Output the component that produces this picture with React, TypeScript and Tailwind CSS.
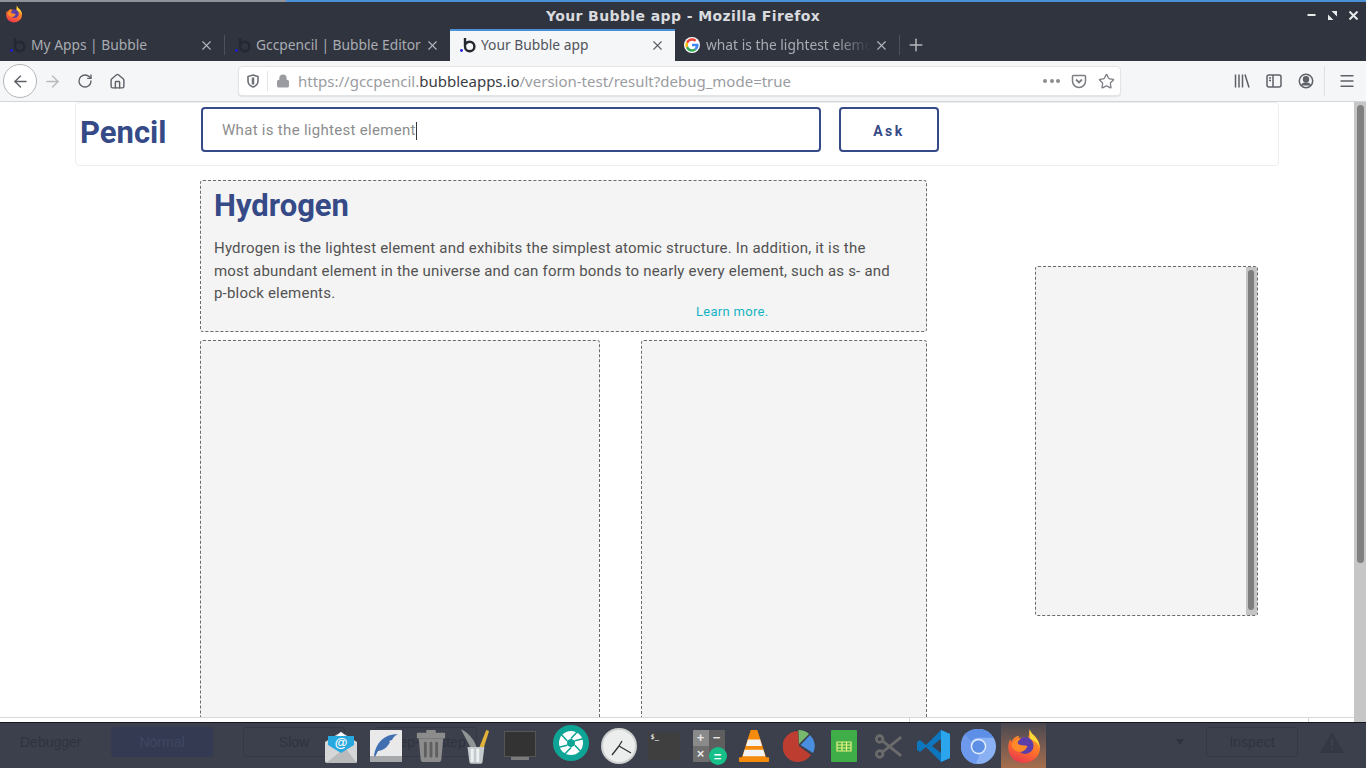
import { Lock, RotateCw, Home, ArrowLeft, ArrowRight, X, Plus, Star, Menu } from "lucide-react"

const uiFont = "font-['Noto_Sans','Open_Sans',sans-serif]"
const pageFont = "font-['Roboto','Inter',sans-serif]"

function BubbleLogo({ dim }: { dim?: boolean }) {
  return (
    <svg width="18" height="18" viewBox="0 0 18 18" className="shrink-0">
      <circle cx="2.5" cy="14.5" r="1.4" fill="#1a1ae0" />
      <path d="M6 2v8.5a4.7 4.7 0 1 0 4.7-4.7A4.7 4.7 0 0 0 6.5 8" fill="none" stroke={dim ? "#232833" : "#22262e"} strokeWidth="2.4" />
    </svg>
  )
}

function GoogleLogo() {
  return (
    <svg width="16" height="16" viewBox="0 0 48 48" className="mr-[2px] shrink-0">
      <circle cx="24" cy="24" r="24" fill="#fff" />
      <path fill="#ea4335" d="M24 11c3.500 0 6.200 1.300 8.200 3.100l5.300-5.200C34.200 5.900 29.500 4 24 4 16.200 4 9.500 8.500 6.200 15l6.200 4.800C13.900 14.700 18.500 11 24 11z" />
      <path fill="#4285f4" d="M43.600 24.500c0-1.500-.1-2.800-.4-4.100H24v7.600h11.100c-.5 2.500-1.900 4.700-4 6.100l6.100 4.700c3.600-3.300 6.400-8.200 6.400-14.300z" />
      <path fill="#fbbc05" d="M12.400 28.300A12 12 0 0 1 11.800 24c0-1.500.2-2.900.6-4.300L6.200 15A20 20 0 0 0 4 24c0 3.200.8 6.300 2.200 9z" />
      <path fill="#34a853" d="M24 44c5.400 0 9.900-1.800 13.200-4.800l-6.100-4.700c-1.800 1.200-4.200 2-7.100 2-5.500 0-10.100-3.700-11.600-8.700L6.200 33C9.500 39.500 16.200 44 24 44z" />
    </svg>
  )
}

function FirefoxLogo({ size, id }: { size: number; id: string }) {
  return (
    <svg width={size} height={size} viewBox="0 0 32 32" className="shrink-0">
      <defs>
        <linearGradient id={id} x1="0.7" y1="0" x2="0.3" y2="1">
          <stop offset="0" stopColor="#ffb02e" />
          <stop offset="0.55" stopColor="#ff6f2b" />
          <stop offset="1" stopColor="#e8384f" />
        </linearGradient>
      </defs>
      <path d="M21 1c1 4 4 5 6 8 3 4 3.500 8 3 11-1 6-7 11-14 11C8 31 2 25 2 17c0-3 1-6 2-7 0 1 .5 2 1 2.500C6 9 9 7 12 7c-1 1-1 2-.5 2 2-1 6-1 8 1 1-3 1-6 1.500-9z" fill={`url(#${id})`} />
      <path d="M21 1c1 4 4 5 6 8 2 3 3 6 3 9-1-4-4-7-9-8 1-3 0-6 0-9z" fill="#ffd93a" />
      <circle cx="17" cy="15.500" r="7.500" fill="#5b3ea8" />
      <path d="M5 15c1-4 5-6 8-5-2 1-3 2-2.500 3.500C12 16 17 15 19 16c-1 4-5 6-8 5-3-.5-5.500-3-6-6z" fill="#ff8a2a" />
    </svg>
  )
}

function Tab({ title, logo, active, fade, width }: { title: string; logo: React.ReactNode; active?: boolean; fade?: boolean; width: string }) {
  return (
    <div className={`relative flex items-center pl-[9px] pr-[10px] text-[13.800px] ${width} ${active ? "h-[32px] border-t-2 border-[#4a90d9] bg-[#f5f6f7] pb-[2px] text-[#50545c]" : "h-[32px] text-[#a9acb2]"}`}>
      {logo}
      <span className={`ml-[4px] flex-1 overflow-hidden whitespace-nowrap ${fade ? "[mask-image:linear-gradient(to_right,#000_80%,transparent)]" : ""}`}>{title}</span>
      <X size={15} strokeWidth={1.8} className={`ml-[4px] shrink-0 ${active ? "text-[#5a5e66]" : "text-[#b4b6bb]"}`} />
    </div>
  )
}

function TitleBar() {
  return (
    <div className="relative flex h-[29px] shrink-0 items-center justify-center border-t-2 border-[#4a90d9] bg-[#30343e] pt-[2px]">
      <div className="absolute left-0 top-[-2px] h-[2px] w-[286px] bg-[#8f9298]" />
      <div className="absolute left-[5px] top-[3px]">
        <FirefoxLogo size={18} id="ffsmall" />
      </div>
      <span className="font-['DejaVu_Sans',sans-serif] text-[14px] font-bold tracking-[0.4px] text-[#d9dbdf]">Your Bubble app - Mozilla Firefox</span>
      <div className="absolute right-[8px] top-[9px] flex items-center gap-[12px] text-[#e8e9eb]">
        <svg width="9" height="9" viewBox="0 0 9 9" fill="currentColor">
          <rect x="0.500" y="3" width="8" height="2" />
        </svg>
        <svg width="9" height="9" viewBox="0 0 9 9" fill="currentColor">
          <path d="M0 3.500V9H5.500zM9 5.500V0H3.500z" />
        </svg>
        <svg width="9" height="9" viewBox="0 0 9 9" fill="none" stroke="currentColor" strokeWidth="2">
          <path d="M.5.500l8 8M8.500.500l-8 8" />
        </svg>
      </div>
    </div>
  )
}

function TabStrip() {
  return (
    <div className={`flex h-[32px] shrink-0 items-center bg-[#30343e] ${uiFont}`}>
      <Tab title="My Apps | Bubble" logo={<BubbleLogo dim />} width="w-[224px]" />
      <div className="h-[20px] w-px bg-[#4c505a]" />
      <Tab title="Gccpencil | Bubble Editor" logo={<BubbleLogo dim />} width="w-[225px]" />
      <Tab title="Your Bubble app" logo={<BubbleLogo />} width="w-[225px]" active />
      <Tab title="what is the lightest element" logo={<GoogleLogo />} width="w-[224px]" fade />
      <div className="h-[20px] w-px bg-[#4c505a]" />
      <Plus size={20} strokeWidth={1.8} className="ml-[6px] text-[#b4b6bb]" />
    </div>
  )
}

function Toolbar() {
  return (
    <div className={`flex h-[41px] shrink-0 items-center border-b border-[#d4d5d8] bg-[#f5f6f7] text-[#5e6168] ${uiFont}`}>
      <div className="ml-[3px] flex h-[34px] w-[34px] items-center justify-center rounded-full border border-[#b5b6b9] bg-white">
        <ArrowLeft size={19} strokeWidth={1.8} />
      </div>
      <ArrowRight size={19} strokeWidth={1.8} className="ml-[6px] text-[#b8babd]" />
      <RotateCw size={16} strokeWidth={2} className="ml-[15px]" />
      <Home size={17} strokeWidth={2} className="ml-[16px]" />
      <div className="ml-[112px] flex h-[30px] w-[883px] items-center rounded-[4px] border border-[#e3e4e6] bg-white text-[15px] shadow-[0_1px_1px_rgba(0,0,0,0.08)]">
        <svg width="16" height="16" viewBox="0 0 16 16" className="ml-[6px] text-[#6d7076]" fill="none" stroke="currentColor" strokeWidth="1.600">
          <path d="M8 2l5 1.500v4.500c0 3-2.200 5-5 6-2.800-1-5-3-5-6V3.500z" />
          <path d="M8 4.500v7" strokeWidth="2.500" />
        </svg>
        <div className="ml-[6px] h-[20px] w-px bg-[#e3e4e6]" />
        <Lock size={14} strokeWidth={2.5} fill="currentColor" className="ml-[8px] text-[#9a9ca1]" />
        <span className="ml-[8px] whitespace-nowrap text-[#9a9ca1]">
          https://gccpencil.<span className="text-[#3a3d44]">bubbleapps.io</span>/version-test/result?debug_mode=true
        </span>
        <div className="flex-1" />
        <div className="flex gap-[2.500px]">
          <span className="h-[4px] w-[4px] rounded-full bg-[#8b8d92]" />
          <span className="h-[4px] w-[4px] rounded-full bg-[#8b8d92]" />
          <span className="h-[4px] w-[4px] rounded-full bg-[#8b8d92]" />
        </div>
        <svg width="16" height="16" viewBox="0 0 16 16" className="ml-[11px] text-[#7c7e84]" fill="none" stroke="currentColor" strokeWidth="1.500">
          <path d="M2.500 2.500h11a1 1 0 0 1 1 1V8a6.500 6.500 0 0 1-13 0V3.500a1 1 0 0 1 1-1z" />
          <path d="M5 6.500l3 3 3-3" strokeWidth="1.800" />
        </svg>
        <Star size={17} strokeWidth={1.800} className="ml-[11px] mr-[5px] text-[#7c7e84]" />
      </div>
      <div className="flex-1" />
      <svg width="16" height="16" viewBox="0 0 16 16" className="mr-[16px]" fill="none" stroke="currentColor" strokeWidth="1.500">
        <path d="M1.500 1.500v13M5 1.500v13M8.500 1.500v13M11 1.500l4 13" />
      </svg>
      <svg width="16" height="16" viewBox="0 0 16 16" className="mr-[16px]" fill="none" stroke="currentColor" strokeWidth="1.500">
        <rect x="1" y="2" width="14" height="12" rx="2" />
        <path d="M7 2v12M3 5h2M3 7.500h2" />
      </svg>
      <svg width="16" height="16" viewBox="0 0 16 16" className="mr-[10px]" fill="none" stroke="currentColor" strokeWidth="1.500">
        <circle cx="8" cy="8" r="6.700" />
        <circle cx="8" cy="6.300" r="2.500" fill="currentColor" />
        <path d="M3.500 12.500c1-2 2.500-2.600 4.500-2.600s3.500.6 4.500 2.600" fill="currentColor" />
      </svg>
      <div className="h-[30px] w-px bg-[#dfe0e2]" />
      <Menu size={18} strokeWidth={1.800} className="ml-[13px] mr-[10px]" />
    </div>
  )
}

function Card({ className, children }: { className: string; children?: React.ReactNode }) {
  return <div className={`rounded-[3px] border border-dashed border-[#6a6a6a] bg-[#f4f4f4] ${className}`}>{children}</div>
}

function Page() {
  return (
    <div className={`relative min-h-0 flex-1 overflow-hidden bg-white ${pageFont}`}>
      <div className="ml-[75px] flex h-[64px] w-[1204px] items-start rounded-[4px] border border-[#eceded] bg-white">
        <h1 className="ml-[4px] mt-[12px] w-[121px] text-[31px] font-bold leading-[36px] text-[#364a87]">Pencil</h1>
        <div className="mt-[4px] flex h-[45px] w-[620px] items-center rounded-[4px] border-2 border-[#364a87] pl-[19px] pt-[2px] text-[15px] tracking-[0.3px] text-[#8d8d8d]">
          What is the lightest element
          <span className="h-[18px] w-px bg-[#33363c]" />
        </div>
        <div className="ml-[18px] mt-[4px] flex h-[45px] w-[100px] items-center justify-center rounded-[4px] border-2 border-[#364a87] pt-[3px] text-[14px] font-bold tracking-[2.500px] text-[#364a87]">Ask</div>
      </div>
      <div className="mt-[14px] flex items-start">
        <div className="ml-[200px] flex w-[727px] flex-col gap-[8px]">
          <Card className="h-[152px] pl-[13px] pr-[32px]">
            <h2 className="mt-[6px] text-[31px] font-bold leading-[38px] text-[#364a87]">Hydrogen</h2>
            <p className="mt-[12px] text-[15px] leading-[22.500px] tracking-[0.2px] text-[#525252]">
              Hydrogen is the lightest element and exhibits the simplest atomic structure. In addition, it is the most abundant element in the universe and can form bonds to nearly every element, such as s- and p-block elements.
            </p>
            <div className="ml-[482px] text-[13px] leading-[14px] tracking-[0.3px] text-[#16b3c4]">Learn more.</div>
          </Card>
          <div className="flex gap-[41px]">
            <Card className="h-[400px] w-[400px]" />
            <Card className="h-[400px] w-[286px]" />
          </div>
        </div>
        <Card className="relative ml-[108px] mt-[86px] h-[350px] w-[223px]">
          <div className="absolute bottom-0 right-0 top-0 w-[11px] bg-[#c4c4c4]">
            <div className="ml-[2px] mt-[3px] h-[340px] w-[6px] rounded-full bg-[#7d7d7d]" />
          </div>
        </Card>
      </div>
      <div className="absolute bottom-0 left-0 right-0 h-[5px] border-t border-[#d8d8d8] bg-white">
        <div className="absolute bottom-0 left-[909px] top-0 w-px bg-[#d8d8d8]" />
        <div className="absolute bottom-0 left-[1308px] top-0 w-px bg-[#d8d8d8]" />
      </div>
      <div className="absolute bottom-0 right-0 top-0 w-[12px] bg-[#c6c6c6]">
        <div className="mx-auto mt-[3px] h-[458px] w-[7px] rounded-full bg-[#808080]" />
      </div>
    </div>
  )
}

function DockCell({ className, children }: { className?: string; children: React.ReactNode }) {
  return <div className={`flex h-[46px] w-[45px] shrink-0 items-center justify-center ${className ?? ""}`}>{children}</div>
}

function DockIcons() {
  return (
    <div className="absolute left-[318px] top-0 flex h-[46px] items-center">
      <DockCell>
        {/* mail */}
        <svg width="32" height="33" viewBox="0 0 32 33">
          <path d="M0 12L16 2l16 10v19a2 2 0 0 1-2 2H2a2 2 0 0 1-2-2z" fill="#d4d6d8" />
          <path d="M1 33l19-15 12 15z" fill="#b8babc" />
          <path d="M3 6h26v9L16 23 3 15z" fill="#27a8df" />
          <path d="M12 6l4-4 4 4z" fill="#fff" />
          <text x="16" y="17" textAnchor="middle" fontSize="13" fontWeight="700" fontFamily="Liberation Sans, sans-serif" fill="#fff">@</text>
        </svg>
      </DockCell>
      <DockCell>
        {/* feather */}
        <svg width="32" height="32" viewBox="0 0 32 32">
          <rect width="32" height="32" rx="1" fill="#e9e9ea" />
          <rect y="26" width="32" height="6" fill="#a7a8aa" />
          <path d="M4 25c2-12 10-21 24-21-4 2-5 4-6 6l-3 1 1 1c-2 4-5 8-12 9L5 27z" fill="#3f6fb0" />
        </svg>
      </DockCell>
      <DockCell>
        {/* trash */}
        <svg width="30" height="32" viewBox="0 0 30 34">
          <rect x="0" y="3" width="30" height="6" rx="1" fill="#8c8c8c" />
          <rect x="10" y="0" width="10" height="4" fill="#8c8c8c" />
          <path d="M2 9h26l-2 22a3 3 0 0 1-3 3H7a3 3 0 0 1-3-3z" fill="#8c8c8c" />
          <path d="M9 14v14M15 14v14M21 14v14" stroke="#5f5f5f" strokeWidth="3" strokeLinecap="round" />
        </svg>
      </DockCell>
      <DockCell className="-translate-x-px">
        {/* pens */}
        <svg width="30" height="36" viewBox="0 0 32 38">
          <path d="M12 22L1 1c7 3 14 10 17 20z" fill="#8f9494" />
          <path d="M20 22l8-20 3 1-6 19z" fill="#e3b23c" />
          <path d="M8 20h18l-2 16a2 2 0 0 1-2 2h-10a2 2 0 0 1-2-2z" fill="#c4cace" />
          <path d="M13 22v14M19 22v14" stroke="#eef1f2" strokeWidth="3" />
        </svg>
      </DockCell>
      <DockCell className="-translate-x-px">
        {/* monitor */}
        <svg width="32" height="30" viewBox="0 0 32 30">
          <rect x="0.500" y="0.500" width="31" height="25" fill="#333333" stroke="#555" />
          <rect x="7" y="26" width="18" height="3" fill="#7b7b7b" />
        </svg>
      </DockCell>
      <DockCell className="ml-[5px] pb-[6px]">
        {/* aperture */}
        <svg width="36" height="36" viewBox="0 0 36 36">
          <circle cx="18" cy="18" r="18" fill="#0fa596" />
          <circle cx="18" cy="18" r="12" fill="#fff" />
          <path d="M18 13.500l3.900 2.250v4.500L18 22.500l-3.900-2.250v-4.500z" fill="#0fa596" />
          <path d="M18 13.500L26 5M21.900 15.750L33 13M21.900 20.250L30 29M18 22.500L10 31M14.100 20.250L3 23M14.100 15.750L6 7" stroke="#0fa596" strokeWidth="1.600" />
        </svg>
      </DockCell>
      <DockCell className="ml-[3px]">
        {/* clock */}
        <svg width="36" height="36" viewBox="0 0 36 36">
          <circle cx="18" cy="18" r="18" fill="#cfd1d1" />
          <circle cx="18" cy="18" r="16" fill="#eceded" />
          <path d="M18 18L11 27M18 18l12 7M18 18l3-5" stroke="#333" strokeWidth="1.300" />
        </svg>
      </DockCell>
      <DockCell>
        {/* terminal */}
        <div className="flex h-[28px] w-[32px] items-start bg-[#3f3f3f] pl-[3px] font-['DejaVu_Sans_Mono',monospace] text-[7px] font-bold leading-[10px] text-[#dcdcdc]">$_</div>
      </DockCell>
      <DockCell>
        {/* calculator */}
        <div className="relative h-[32px] w-[32px]">
          <div className="grid h-full w-full grid-cols-2 grid-rows-2 overflow-hidden rounded-[1px] text-center font-['Liberation_Sans',sans-serif] text-[13px] font-bold leading-[16px] text-[#e6e6e6]">
            <span className="bg-[#8a8a8a]">+</span>
            <span className="bg-[#5e5e5e]">−</span>
            <span className="bg-[#6e6e6e]">×</span>
            <span className="bg-[#5e5e5e]" />
          </div>
          <div className="absolute bottom-[-3px] right-[-2px] flex h-[18px] w-[18px] items-center justify-center rounded-full bg-[#16c088] font-['Liberation_Sans',sans-serif] text-[13px] font-bold leading-none text-white">=</div>
        </div>
      </DockCell>
      <DockCell className="pb-[1px]">
        {/* vlc */}
        <svg width="32" height="32" viewBox="0 0 32 34">
          <path d="M12.500 0h7l10 31H2.500z" fill="#f58a0b" />
          <path d="M9.500 10h13l2 7h-17zM6 21h20l2 7H4z" fill="#f4f4f4" />
          <rect x="0" y="29" width="32" height="5" rx="1" fill="#f58a0b" />
        </svg>
      </DockCell>
      <DockCell>
        {/* pie */}
        <svg width="32" height="32" viewBox="0 0 32 32">
          <path d="M15 1a15.500 15.500 0 1 0 13 24L16 16z" fill="#bd3d30" />
          <path d="M15.500 0a15.500 15.500 0 0 1 10.500 4L16 14z" fill="#76b96f" />
          <path d="M27 5a15 15 0 0 1 3 18L17.500 15z" fill="#4a8ee0" />
        </svg>
      </DockCell>
      <DockCell>
        {/* sheets */}
        <svg width="26" height="32" viewBox="0 0 26 32">
          <rect width="26" height="32" rx="1" fill="#3fae49" />
          <path d="M6 12h14v9H6zM6 15h14M6 18h14M11 12v9M15.500 12v9" fill="none" stroke="#e8f17e" strokeWidth="1.200" />
        </svg>
      </DockCell>
      <DockCell>
        {/* scissors */}
        <svg width="28" height="27" viewBox="0 0 30 26">
          <g fill="none" stroke="#6b6b6b" strokeWidth="3">
            <circle cx="5" cy="5" r="3.500" />
            <circle cx="5" cy="21" r="3.500" />
            <path d="M8 7l20 16M8 19L28 3" />
          </g>
        </svg>
      </DockCell>
      <DockCell>
        {/* vscode */}
        <svg width="34" height="34" viewBox="0 0 34 34">
          <path d="M24 1l9 4v24l-9 4L9 18 3 23 0 21V13l3-2 6 5z" fill="#0e76bd" />
          <path d="M24 1l9 4v24l-9 4z" fill="#2ba5ec" />
          <path d="M24 10v14l-9-7z" fill="#3b404c" />
        </svg>
      </DockCell>
      <DockCell>
        {/* chromium */}
        <svg width="35" height="35" viewBox="0 0 36 36">
          <circle cx="18" cy="18" r="18" fill="#8ab1f3" />
          <path d="M18 0a18 18 0 0 1 15.600 9H18a9 9 0 0 0-8 5L4 5A18 18 0 0 1 18 0z" fill="#5e8fe6" />
          <path d="M0 18A18 18 0 0 1 4 5l8 13a8 8 0 0 0 7 9l-4 9A18 18 0 0 1 0 18z" fill="#6d9aec" />
          <circle cx="18" cy="18" r="8" fill="#e3edfd" />
          <circle cx="18" cy="18" r="6.500" fill="#5e8fe6" />
        </svg>
      </DockCell>
      <DockCell className="bg-gradient-to-b from-[#4a4850] to-[#a96f4c]">
        {/* firefox, active */}
        <FirefoxLogo size={36} id="ffdock" />
      </DockCell>
    </div>
  )
}

function Dock() {
  return (
    <div className="relative h-[46px] shrink-0 border-t border-[#15171c] bg-[#3b404c] font-['Liberation_Sans',sans-serif] text-[14px] text-[#2f3340]">
      <div className="flex h-[38px] items-center">
        <span className="ml-[20px] w-[91px]">Debugger</span>
        <div className="flex h-[30px] w-[102px] items-center justify-center rounded-[3px] bg-[#343a52] text-[#3f4762]">Normal</div>
        <div className="ml-[30px] flex h-[30px] w-[102px] items-center justify-center rounded-[3px] border border-[#343844]">Slow</div>
        <div className="ml-[30px] flex h-[30px] w-[102px] items-center justify-center rounded-[3px] border border-[#343844]">Step-by-step</div>
        <div className="flex-1" />
        <span className="mr-[22px] h-0 w-0 border-x-[4px] border-t-[6px] border-x-transparent border-t-[#2f3340]" />
        <div className="flex h-[30px] w-[92px] items-center justify-center rounded-[3px] border border-[#343844]">Inspect</div>
        <svg width="24" height="21" viewBox="0 0 24 21" className="ml-[22px] mr-[22px]" fill="#343844">
          <path d="M12 0l12 21H0z" />
          <rect x="11" y="7" width="2" height="7" fill="#3b404c" />
          <rect x="11" y="16" width="2" height="2" fill="#3b404c" />
        </svg>
      </div>
      <DockIcons />
    </div>
  )
}

export default function App() {
  return (
    <div className="relative flex h-[768px] w-[1366px] flex-col overflow-hidden bg-white">
      <TitleBar />
      <TabStrip />
      <Toolbar />
      <Page />
      <Dock />
    </div>
  )
}
